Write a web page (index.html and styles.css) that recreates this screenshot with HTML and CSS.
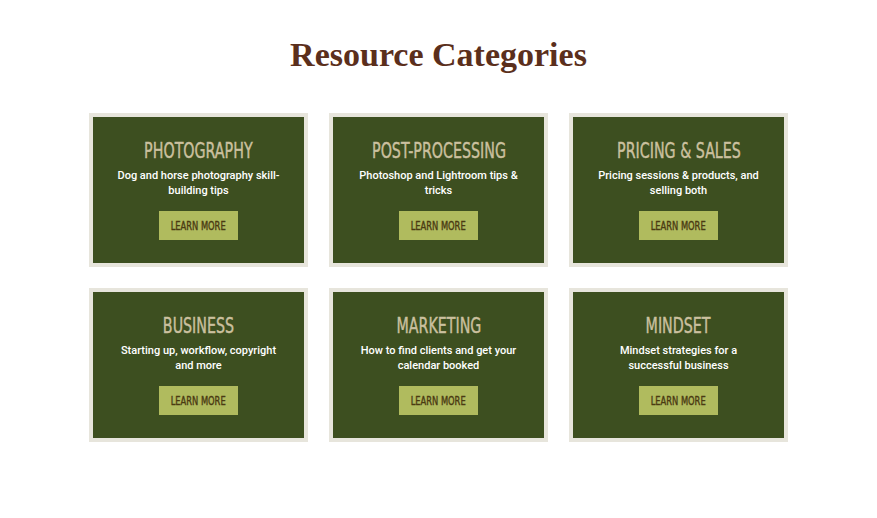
FILE: index.html
```html
<!DOCTYPE html>
<html lang="en">
<head>
    <meta charset="UTF-8">
    <title>Resource Categories</title>
    <link rel="stylesheet" href="styles.css">
</head>
<body>
<div class="page">
    <h1 class="title">Resource Categories</h1>
    <div class="grid">
        <div class="card">
            <h2 class="card_title">PHOTOGRAPHY</h2>
            <p class="card_text">Dog and horse photography skill-building tips</p>
            <a class="btn" href="#"><span>LEARN MORE</span></a>
        </div>
        <div class="card">
            <h2 class="card_title">POST-PROCESSING</h2>
            <p class="card_text">Photoshop and Lightroom tips &amp; tricks</p>
            <a class="btn" href="#"><span>LEARN MORE</span></a>
        </div>
        <div class="card">
            <h2 class="card_title">PRICING &amp; SALES</h2>
            <p class="card_text">Pricing sessions &amp; products, and selling both</p>
            <a class="btn" href="#"><span>LEARN MORE</span></a>
        </div>
        <div class="card">
            <h2 class="card_title">BUSINESS</h2>
            <p class="card_text">Starting up, workflow, copyright and more</p>
            <a class="btn" href="#"><span>LEARN MORE</span></a>
        </div>
        <div class="card">
            <h2 class="card_title">MARKETING</h2>
            <p class="card_text">How to find clients and get your calendar booked</p>
            <a class="btn" href="#"><span>LEARN MORE</span></a>
        </div>
        <div class="card">
            <h2 class="card_title">MINDSET</h2>
            <p class="card_text">Mindset strategies for a successful business</p>
            <a class="btn" href="#"><span>LEARN MORE</span></a>
        </div>
    </div>
</div>
</body>
</html>
```

FILE: styles.css
```css
body{
    margin: 0;
    background: #ffffff;
    font-family: "Roboto", "Liberation Sans", sans-serif;
}
.page{
    padding-top: 35px;
}
.title{
    margin: 0;
    text-align: center;
    font-family: "Liberation Serif", serif;
    font-weight: bold;
    font-size: 34px;
    line-height: 40px;
    color: #5b2f1c;
}
.grid{
    display: grid;
    grid-template-columns: repeat(3, 219px);
    grid-auto-rows: 154px;
    gap: 21px;
    justify-content: center;
    margin-top: 38px;
}
.card{
    box-sizing: border-box;
    background: #3d4f20;
    border: 4px solid #e7e5dc;
    display: flex;
    flex-direction: column;
    align-items: center;
    padding: 22px 21px 0;
    text-align: center;
}
.card_title{
    margin: 0;
    font-family: "DejaVu Sans Condensed", "DejaVu Sans", sans-serif;
    font-weight: normal;
    font-size: 22px;
    line-height: 24px;
    color: #cbc09f;
    -webkit-text-stroke: 0.4px #cbc09f;
    white-space: nowrap;
    transform: scaleX(0.72);
}
.card_text{
    margin: 5px 0 0;
    font-size: 11px;
    font-weight: 500;
    line-height: 15px;
    color: #ffffff;
    height: 30px;
}
.btn{
    margin-top: 13px;
    width: 79px;
    height: 29px;
    line-height: 29px;
    background: #b0bb5e;
    color: #4a3a12;
    text-decoration: none;
    font-family: "DejaVu Sans Condensed", "DejaVu Sans", sans-serif;
    font-size: 12.5px;
    white-space: nowrap;
}
.btn span{
    display: inline-block;
    transform: scaleX(0.74);
    -webkit-text-stroke: 0.4px #4a3a12;
}
```
